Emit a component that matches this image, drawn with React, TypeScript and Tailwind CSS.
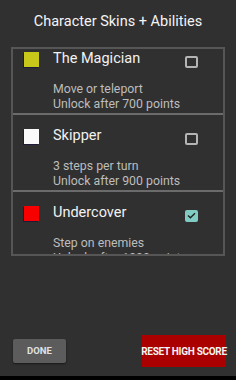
import React from 'react';

interface Skin {
  name: string;
  color: string;
  ability: string;
  unlock: string;
  checked: boolean;
}

const skins: Skin[] = [
  { name: 'The Magician', color: 'bg-[#c8c81a]', ability: 'Move or teleport', unlock: 'Unlock after 700 points', checked: false },
  { name: 'Skipper', color: 'bg-[#fafafa]', ability: '3 steps per turn', unlock: 'Unlock after 900 points', checked: false },
  { name: 'Undercover', color: 'bg-[#f80000]', ability: 'Step on enemies', unlock: 'Unlock after 1200 points', checked: true },
];

const CheckBox: React.FC<{ checked: boolean }> = ({ checked }) =>
  checked ? (
    <div className="mt-[5px] flex h-[12px] w-[13px] items-center justify-center rounded-[2px] bg-[#80cbc4]">
      <svg width="9" height="7" viewBox="0 0 9 7" fill="none">
        <path d="M1 3.5L3.4 5.8L8 1.2" stroke="#222" strokeWidth="1.4" />
      </svg>
    </div>
  ) : (
    <div className="mt-[5px] h-[12px] w-[13px] rounded-[2px] border-2 border-[#b4b4b4]" />
  );

const SkinRow: React.FC<{ skin: Skin; last: boolean }> = ({ skin, last }) => (
  <div>
    <div className="pl-[11px] pr-[25px] pt-[11px]">
      {/* Header: colour swatch, name, checkbox */}
      <div className="flex h-[20px] items-center">
        <div className={`h-[15px] w-[15px] shadow-[-1px_1px_0_#1c1c3a] ${skin.color}`} />
        <span className="ml-[14px] flex-1 text-[14.5px] leading-[20px] text-[#f2f2f2]">{skin.name}</span>
        <CheckBox checked={skin.checked} />
      </div>
      <div className="mt-[13px] pl-[29px] text-[12.3px] leading-[15px] text-[#bdbdbd]">
        <div>{skin.ability}</div>
        <div className="whitespace-nowrap">{skin.unlock}</div>
      </div>
    </div>
    {!last && <div className="mt-[1px] h-[2px] bg-[#6b6b6b]" />}
  </div>
);

export default function App() {
  return (
    <div className="flex h-[380px] w-[236px] flex-col bg-[#303030] font-['Roboto',sans-serif]">
      <div className="pt-[11px] text-center text-[14.5px] leading-[21px] text-[#f4f4f4]">
        Character Skins + Abilities
      </div>

      {/* Scrolled list of skins */}
      <div className="mx-[11px] mt-[15px] h-[209px] overflow-hidden border-2 border-[#565656]">
        <div className="-mt-[11px]">
          {skins.map((s, i) => (
            <SkinRow key={s.name} skin={s} last={i === skins.length - 1} />
          ))}
        </div>
      </div>

      <div className="flex-1" />

      <div className="flex items-center justify-between pl-[13px] pr-[10px] pb-[9px]">
        <button className="h-[24px] w-[53px] rounded-[2px] bg-[#5c5c5c] text-[9.5px] font-bold text-[#e2e2e2] shadow-[0_1px_2px_rgba(0,0,0,0.5)]">
          DONE
        </button>
        <button className="flex h-[32px] w-[84px] items-center justify-center whitespace-nowrap bg-[#aa0000] text-[10px] font-bold tracking-[-0.3px] text-[#f4f4f4]">
          RESET HIGH SCORE
        </button>
      </div>
      <div className="h-[4px] bg-black" />
    </div>
  );
}
